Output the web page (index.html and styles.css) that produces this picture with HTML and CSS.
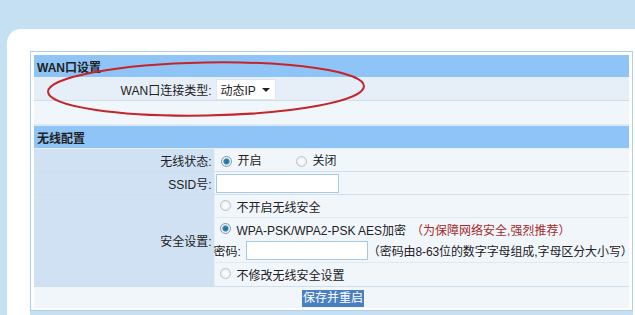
FILE: index.html
```html
<!DOCTYPE html>
<html>
<head>
<meta charset="utf-8">
<link rel="stylesheet" href="styles.css">
</head>
<body>
<div class="panel">
  <div class="frame">
    <table class="form">
      <colgroup><col class="c1"><col class="c2"></colgroup>
      <tr class="head"><td colspan="2">WAN口设置</td></tr>
      <tr class="wan">
        <td class="label">WAN口连接类型:</td>
        <td class="val"><span class="select">动态IP<span class="caret"></span></span></td>
      </tr>
      <tr class="empty"><td colspan="2"></td></tr>
      <tr class="head"><td colspan="2">无线配置</td></tr>
      <tr class="row">
        <td class="label">无线状态:</td>
        <td class="val"><span class="radio on"></span><span class="opt">开启</span><span class="radio"></span><span class="opt">关闭</span></td>
      </tr>
      <tr class="row">
        <td class="label">SSID号:</td>
        <td class="val"><span class="input ssid"></span></td>
      </tr>
      <tr class="sec">
        <td class="label">安全设置:</td>
        <td class="val stack">
          <div class="line l1"><span class="radio"></span><span class="opt">不开启无线安全</span></div>
          <div class="line l2">
            <div class="sub"><span class="radio on"></span><span class="opt">WPA-PSK/WPA2-PSK AES加密</span><span class="warn">（为保障网络安全,强烈推荐）</span></div>
            <div class="sub pw"><span class="pwlabel">密码:</span><span class="input pwd"></span><span class="hint">（密码由8-63位的数字字母组成,字母区分大小写）</span></div>
          </div>
          <div class="line l3"><span class="radio"></span><span class="opt">不修改无线安全设置</span></div>
        </td>
      </tr>
      <tr class="save"><td colspan="2"><span class="btn">保存并重启</span></td></tr>
    </table>
  </div>
  <div class="foot"></div>
  <svg class="oval" width="330" height="62" viewBox="0 0 330 62"><ellipse cx="165" cy="31" rx="158" ry="26.5" transform="rotate(-1 165 31)" fill="none" stroke="#c4242b" stroke-width="2"/></svg>
</div>
</body>
</html>
```
FILE: styles.css
```css
html, body { margin: 0; padding: 0; }
body {
  background: #c6e0f3;
  font-family: "Liberation Sans", "Noto Sans CJK SC", sans-serif;
  font-size: 12px;
  color: #222;
  height: 315px;
  overflow: hidden;
}
.panel {
  position: relative;
  margin: 29px 0 0 7px;
  background: #fff;
  border-top-left-radius: 14px;
  padding: 22px 2px 0 23px;
  height: 264px;
}
.frame {
  border: 1px solid #b0d0ea;
  padding: 3px 4px 0 3px;
  height: 255px;
  background: #fff;
}
.form {
  width: 595px;
  border-collapse: collapse;
  table-layout: fixed;
}
.c1 { width: 180px; }
.c2 { width: 415px; }
.form td { padding: 0; border-bottom: 1px solid #cfdeeb; }
.head td {
  background: #8fc4f6;
  font-weight: bold;
  height: 22px;
  padding-left: 3px;
  border-bottom: 1px solid #e8f1f9;
}
.wan td { background: #e6eef7; height: 22px; }
.wan .label { background: #e6eef7; }
.empty td { background: #f1f6fb; height: 23px; border-bottom: 2px solid #dce8f3; }
.label {
  text-align: right;
  background: #cfe1f2;
  padding-right: 2px !important;
  border-right: 1px solid #e6eef6;
}
.val { background: #f1f6fb; padding-left: 1px !important; white-space: nowrap; }
.row td { height: 22px; }
.select {
  display: inline-flex;
  align-items: center;
  width: 54px;
  height: 19px;
  background: #fff;
  border: 1px solid #dfe6ee;
  padding-left: 4px;
  vertical-align: middle;
  position: relative;
}
.caret {
  position: absolute;
  right: 5px;
  top: 8px;
  border-left: 4px solid transparent;
  border-right: 4px solid transparent;
  border-top: 4px solid #222;
}
.radio {
  display: inline-block;
  flex: none;
  width: 11px;
  height: 11px;
  border-radius: 50%;
  border: 1px solid #b9c3cc;
  background: radial-gradient(circle, #fff 0, #e4e9ee 100%);
  vertical-align: middle;
  margin: 0 6px 2px 5px;
  box-sizing: border-box;
}
.radio.on {
  border-color: #7f98ae;
  background: radial-gradient(circle, #1a6a94 0, #2f89b3 2.5px, #e8f0f6 3.6px, #fff 100%);
}
.opt { margin-right: 29px; }
.input {
  display: inline-block;
  flex: none;
  background: #fff;
  border: 1px solid #a9c9e3;
  box-sizing: border-box;
  vertical-align: middle;
}
.ssid { width: 123px; height: 19px; }
.pwd { width: 122px; height: 19px; margin: 0 0 0 5px; }
.stack { padding: 0 !important; }
.line { display: flex; }
.l1 { height: 22px; border-bottom: 1px solid #dfe9f2; }
.l1, .l3 { align-items: center; }
.l2 { height: 44px; border-bottom: 1px solid #dfe9f2; flex-direction: column; justify-content: center; }
.l3 { height: 23px; }
.sub { display: flex; align-items: center; height: 21px; white-space: nowrap; }
.sub > span { flex: none; }
.sub .opt { margin-right: 0; }
.pwlabel { margin-left: -1px; }
.warn { color: #a52a2a; margin-left: 5px; }
.hint { margin-left: 0; letter-spacing: -0.1px; }
.save td { background: #f1f6fb; height: 21px; text-align: left; padding-left: 268px; border-bottom: none; }
.btn {
  display: inline-block;
  background: #4b80c0;
  color: #fff;
  padding: 1px 1px;
  line-height: 15px;
  margin-top: 2px;
}
.foot {
  height: 10px;
  background: #c6e0f3;
}
.oval {
  position: absolute;
  left: 34px;
  top: 29px;
}
```
